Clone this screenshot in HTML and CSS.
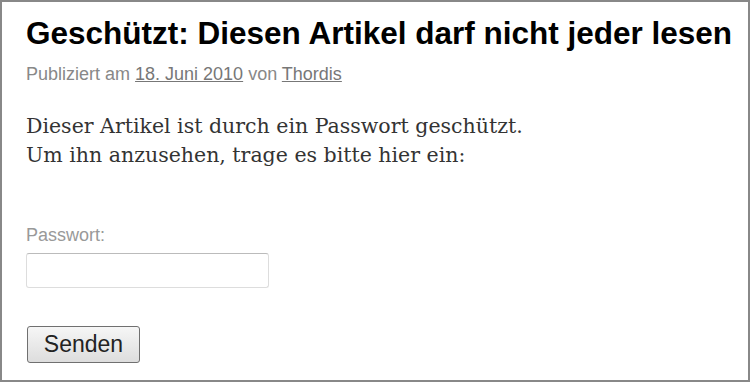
FILE: index.html
```html
<!DOCTYPE html>
<html lang="de">
<head>
<meta charset="utf-8">
<title>Geschützt</title>
<link rel="stylesheet" href="styles.css">
</head>
<body>
<div class="frame">
  <article class="post">
    <h1 class="title">Geschützt: Diesen Artikel darf nicht jeder lesen</h1>
    <div class="meta">Publiziert am <a href="#">18. Juni 2010</a> von <a href="#">Thordis</a></div>
    <div class="content">
      <p>Dieser Artikel ist durch ein Passwort geschützt.<br>Um ihn anzusehen, trage es bitte hier ein:</p>
      <form class="pwform">
        <label class="label" for="pw">Passwort:</label>
        <input class="input" id="pw" type="password">
        <button class="btn" type="button">Senden</button>
      </form>
    </div>
  </article>
</div>
</body>
</html>
```
FILE: styles.css
```css
html, body { margin: 0; padding: 0; background: #fff; }
.frame {
  width: 750px;
  height: 382px;
  box-sizing: border-box;
  border: 2px solid #888;
  padding: 13px 24px 0 24px;
  overflow: hidden;
}
.title {
  margin: 0;
  font-family: "Liberation Sans", Arial, sans-serif;
  font-weight: bold;
  font-size: 31.5px;
  line-height: 36px;
  color: #000;
  white-space: nowrap;
}
.meta {
  margin-top: 12px;
  font-family: "Liberation Sans", Arial, sans-serif;
  font-size: 18px;
  line-height: 22px;
  color: #888;
}
.meta a { color: #777; text-decoration: underline; }
.content p {
  margin: 27px 0 0 0;
  font-family: "DejaVu Serif", Georgia, serif;
  font-size: 20.5px;
  line-height: 29px;
  color: #333;
}
.pwform { display: flex; flex-direction: column; align-items: flex-start; margin-top: 54px; }
.label {
  font-family: "Liberation Sans", Arial, sans-serif;
  font-size: 18px;
  line-height: 22px;
  color: #999;
}
.input {
  margin-top: 7px;
  width: 243px;
  height: 35px;
  box-sizing: border-box;
  border: 1px solid #ddd;
  border-top-color: #bbb;
  border-radius: 3px;
  background: #fff;
}
.btn {
  margin-top: 38px;
  margin-left: 1px;
  width: 113px;
  height: 37px;
  box-sizing: border-box;
  border: 1px solid #707070;
  border-radius: 3px;
  background: linear-gradient(#f6f6f6, #dddddd);
  font-family: "Liberation Sans", Arial, sans-serif;
  font-size: 23px;
  color: #222;
  padding: 0;
}
```
